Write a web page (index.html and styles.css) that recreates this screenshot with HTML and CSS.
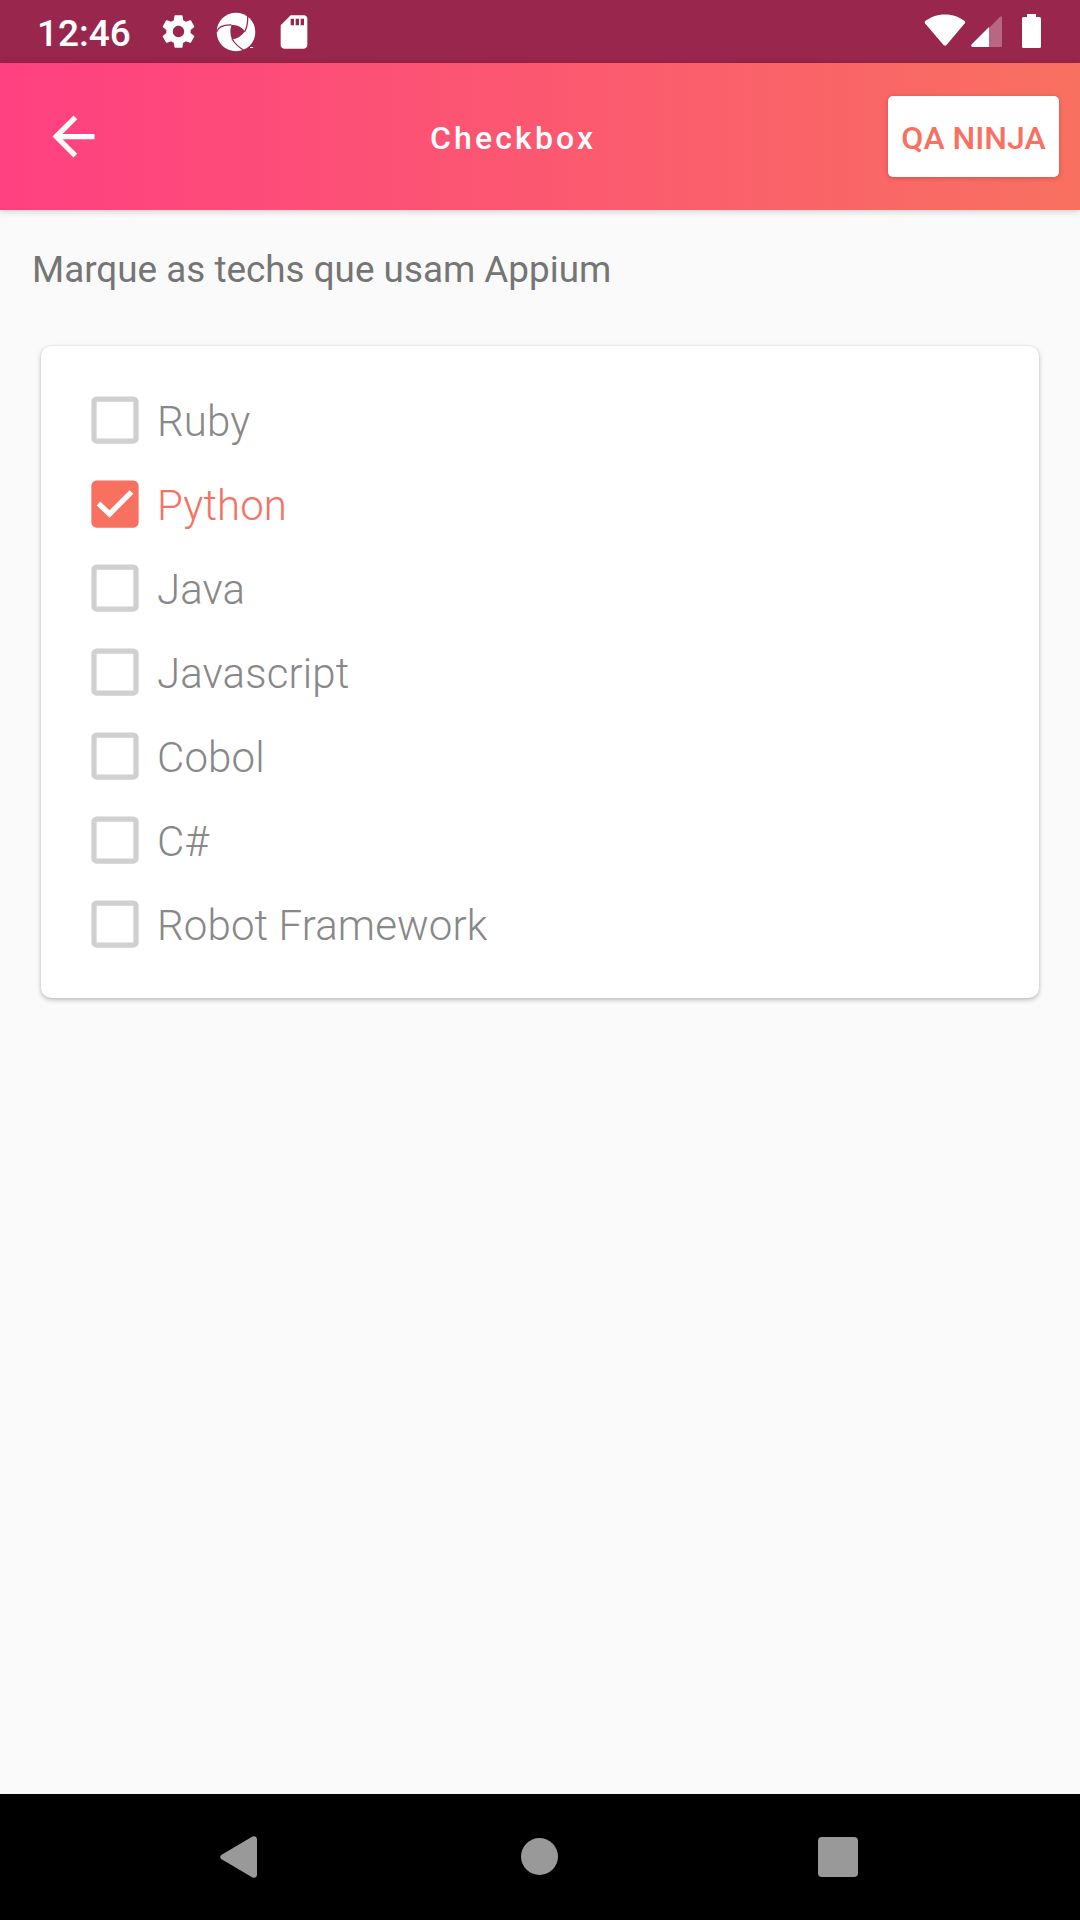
FILE: index.html
```html
<!DOCTYPE html>
<html lang="pt-BR">
<head>
<meta charset="utf-8">
<title>Checkbox</title>
<link rel="stylesheet" href="styles.css">
</head>
<body>
<div class="screen">
  <div class="status">
    <span class="clock">12:46</span>
    <div class="notifications">
      <svg class="gear" viewBox="0 0 24 24"><path d="M19.43 12.98c.04-.32.07-.64.07-.98s-.03-.66-.07-.98l2.11-1.65c.19-.15.24-.42.12-.64l-2-3.46c-.12-.22-.39-.3-.61-.22l-2.49 1c-.52-.4-1.08-.73-1.69-.98l-.38-2.65C14.46 2.18 14.25 2 14 2h-4c-.25 0-.46.18-.49.42l-.38 2.65c-.61.25-1.17.59-1.69.98l-2.49-1c-.23-.09-.49 0-.61.22l-2 3.46c-.13.22-.07.49.12.64l2.11 1.65c-.04.32-.07.65-.07.98s.03.66.07.98l-2.11 1.65c-.19.15-.24.42-.12.64l2 3.46c.12.22.39.3.61.22l2.49-1c.52.4 1.08.73 1.69.98l.38 2.65c.03.24.24.42.49.42h4c.25 0 .46-.18.49-.42l.38-2.65c.61-.25 1.17-.59 1.69-.98l2.49 1c.23.09.49 0 .61-.22l2-3.46c.12-.22.07-.49-.12-.64l-2.11-1.65zM12 15.5c-1.930 0-3.500-1.570-3.500-3.500s1.570-3.500 3.500-3.500 3.500 1.570 3.500 3.500-1.570 3.500-3.500 3.500z"/></svg>
      <svg class="shutter" viewBox="0 0 40 40">
        <circle cx="20" cy="20" r="19.3"/>
        <path class="cut" d="M15.500 13Q24 12 28.800 19.500Q24.500 26 16 27.500Q13 20 15.500 13Z"/>
        <path class="slit" d="M.5 20Q3 12.500 15.500 13M31.500 2Q32.500 13 28.500 20M16 27Q20 33.500 28 38.500"/>
        <path class="mark" d="M34 35.500h3"/>
      </svg>
      <svg class="sd" viewBox="0 0 24 24"><path d="M18 2h-8L4.020 8 4 20c0 1.100.9 2 2 2h12c1.100 0 2-.9 2-2V4c0-1.100-.9-2-2-2zm-6 6h-2V4h2v4zm3 0h-2V4h2v4zm3 0h-2V4h2v4z"/></svg>
    </div>
    <div class="system">
      <svg class="wifi" viewBox="0 0 42 33"><path d="M21 .5C13 .5 6.500 3.200 1.200 7Q.2 8 1 9.200L19.500 31Q21 32.500 22.500 31L40.800 9.200Q41.700 8 40.600 7C35.500 3.200 29 .5 21 .5Z"/></svg>
      <svg class="signal" viewBox="0 0 31 31"><path class="faint" d="M18 12 29 .8Q31-.5 31 2V29.500Q31 31 29.500 31H18Z"/><path d="M18 11V31H1.500Q-.5 30.500.5 28.500Z"/></svg>
      <svg class="battery" viewBox="0 0 19 34"><path d="M5 0H14V3H17.500Q19 3 19 4.500V32.500Q19 34 17.500 34H1.500Q0 34 0 32.500V4.500Q0 3 1.500 3H5Z"/></svg>
    </div>
  </div>
  <header class="appbar">
    <svg class="back" viewBox="0 0 24 24"><path d="M20 11H7.830l5.590-5.590L12 4l-8 8 8 8 1.410-1.410L7.830 13H20v-2z"/></svg>
    <h1 class="title">Checkbox</h1>
    <button class="ninja">QA NINJA</button>
  </header>
  <main class="content">
    <p class="prompt">Marque as techs que usam Appium</p>
    <div class="card">
      <div class="row"><svg class="box" viewBox="0 0 48 48"><rect x="3" y="3" width="42" height="42" rx="2.600"/></svg><span class="label">Ruby</span></div>
      <div class="row checked"><svg class="box" viewBox="0 0 48 48"><rect x="3" y="3" width="42" height="42" rx="2.600"/><path class="tick" d="M7.500 23.500 18.500 34 40.500 12"/></svg><span class="label">Python</span></div>
      <div class="row"><svg class="box" viewBox="0 0 48 48"><rect x="3" y="3" width="42" height="42" rx="2.600"/></svg><span class="label">Java</span></div>
      <div class="row"><svg class="box" viewBox="0 0 48 48"><rect x="3" y="3" width="42" height="42" rx="2.600"/></svg><span class="label">Javascript</span></div>
      <div class="row"><svg class="box" viewBox="0 0 48 48"><rect x="3" y="3" width="42" height="42" rx="2.600"/></svg><span class="label">Cobol</span></div>
      <div class="row"><svg class="box" viewBox="0 0 48 48"><rect x="3" y="3" width="42" height="42" rx="2.600"/></svg><span class="label">C#</span></div>
      <div class="row"><svg class="box" viewBox="0 0 48 48"><rect x="3" y="3" width="42" height="42" rx="2.600"/></svg><span class="label">Robot Framework</span></div>
    </div>
  </main>
  <nav class="navbar">
    <svg class="nav-back" viewBox="0 0 37 42"><path d="M32.500.6Q36.500-.8 37 3V39Q36.500 42.800 32.500 41.400L1.200 23Q-.8 21 1.200 19Z"/></svg>
    <span class="nav-home"></span>
    <span class="nav-recent"></span>
  </nav>
</div>
</body>
</html>
```
FILE: styles.css
```css
* { box-sizing: border-box; }
body { margin: 0; font-family: Roboto, sans-serif; background: #fafafa; }
svg { display: block; flex: none; }
.screen { width: 1080px; height: 1920px; display: flex; flex-direction: column; overflow: hidden; }

.status { height: 63px; background: #99264d; color: #fff; fill: #fff; display: flex; align-items: center; padding: 0 39px 0 37px; }
.clock { width: 121.5px; font-size: 37px; font-weight: 500; line-height: 43px; padding-top: 3px; }
.notifications { display: flex; align-items: center; }
.gear { width: 39px; height: 39px; }
.shutter { width: 40px; height: 40px; margin-left: 18.5px; margin-top: 1px; }
.cut { fill: #99264d; }
.slit { fill: none; stroke: #99264d; stroke-width: 1.3; }
.mark { stroke: #fff; stroke-width: 1; }
.sd { width: 40px; height: 40px; margin-left: 18px; }
.system { margin-left: auto; display: flex; align-items: center; }
.wifi { width: 42px; height: 33px; margin-top: -3px; }
.signal { width: 31px; height: 31px; margin-left: 5px; }
.faint { opacity: .3; }
.battery { width: 19px; height: 34px; margin-left: 20px; margin-top: -1px; }

.appbar { height: 147px; display: flex; align-items: center; padding: 0 21px 0 42px; background: linear-gradient(90deg, #ff4081, #f87060); box-shadow: 0 1px 7px rgba(0,0,0,.2); position: relative; }
.back { width: 63px; height: 63px; fill: #fff; }
.title { margin: 0 0 0 325px; color: #fff; font-size: 32px; line-height: 38px; font-weight: 500; letter-spacing: 3.15px; padding-top: 2px; }
.ninja { margin-left: auto; width: 171px; height: 81px; border: 0; border-radius: 5px; background: #fff; color: #f87060; font: 500 32px/38px Roboto, sans-serif; padding: 2px 0 0; white-space: nowrap; box-shadow: 0 1px 5px rgba(0,0,0,.2); }

.content { flex: 1; padding: 38px 41px 0; }
.prompt { margin: 0 0 0 -9px; font-size: 36.85px; line-height: 44px; color: #757575; }
.card { margin-top: 54px; height: 652px; border-radius: 10px; background: #fff; padding: 32px 50px; box-shadow: 0 2px 5px rgba(0,0,0,.24), 0 0 2px rgba(0,0,0,.1); }
.row { height: 84px; display: flex; align-items: center; color: #888; }
.box { width: 48px; height: 48px; fill: none; stroke: #d0d0d0; stroke-width: 5.25; margin-right: 18px; }
.label { font-size: 42px; line-height: 50px; font-weight: 300; letter-spacing: .12px; padding-top: 3px; }
.checked { color: #f87060; }
.checked .box { fill: #f87060; stroke: #f87060; }
.checked .tick { fill: none; stroke: #fff; }

.navbar { height: 126px; background: #000; fill: #999; display: flex; align-items: center; padding-left: 220px; }
.nav-back { width: 37px; height: 42px; }
.nav-home { width: 37px; height: 37px; border-radius: 50%; background: #999; margin-left: 264px; margin-top: -1px; }
.nav-recent { width: 40px; height: 40px; border-radius: 4px; background: #999; margin-left: 260px; }
```
